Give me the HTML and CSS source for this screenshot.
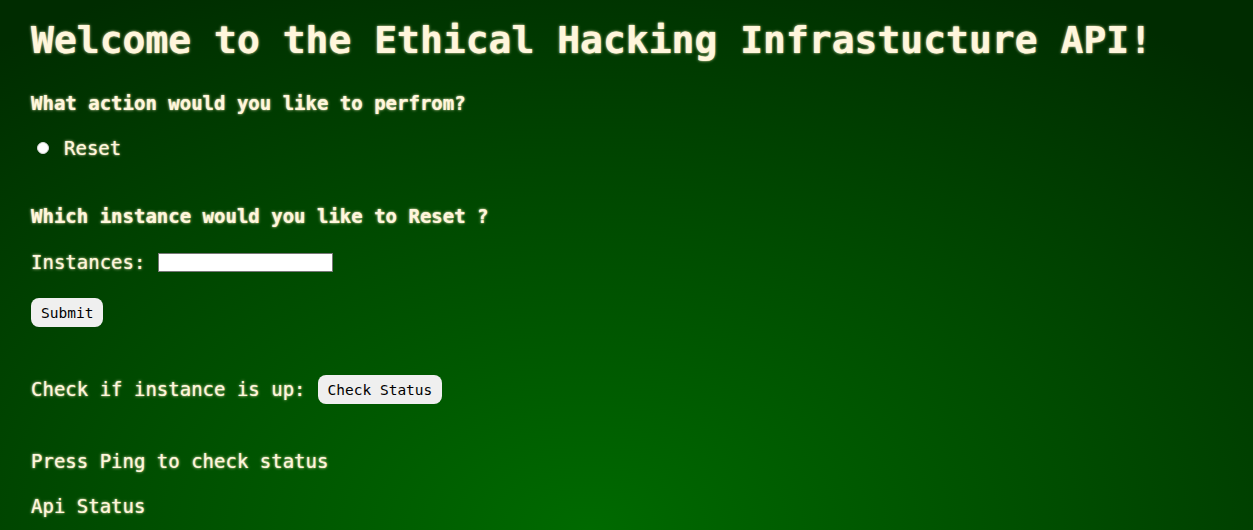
FILE: index.html
```html
<!DOCTYPE html>
<html lang="en">
<head>
<meta charset="utf-8">
<title>Ethical Hacking Infrastructure API</title>
<link rel="stylesheet" href="styles.css">
</head>
<body>
<main class="page">
  <h1 class="title">Welcome to the Ethical Hacking Infrastucture API!</h1>
  <h3 class="question q-action">What action would you like to perfrom?</h3>
  <label class="radio-row">
    <input class="radio" type="radio" name="action" value="reset">
    <span>Reset</span>
  </label>
  <h3 class="question q-instance">Which instance would you like to Reset ?</h3>
  <form class="reset-form">
    <label class="field-row">
      <span>Instances:</span>
      <input class="text-input" type="text" name="instances">
    </label>
    <button class="btn btn-submit" type="button">Submit</button>
  </form>
  <div class="check-row">
    <span>Check if instance is up:</span>
    <button class="btn" type="button">Check Status</button>
  </div>
  <p class="status-line status-ping">Press Ping to check status</p>
  <p class="status-line status-api">Api Status</p>
</main>
</body>
</html>
```
FILE: styles.css
```css
html, body {
  margin: 0;
  padding: 0;
  height: 100%;
}

body {
  background: radial-gradient(ellipse 78% 115% at 47% 100%, #006a00 0%, #004c00 50%, #002c00 100%);
  background-color: #002c00;
  color: #fff6dc;
  font-family: "DejaVu Sans Mono", "Liberation Mono", monospace;
  font-size: 19px;
  overflow: hidden;
}

.page {
  display: flex;
  flex-direction: column;
  align-items: flex-start;
  padding: 0 31px;
  text-shadow: 0 0 3px rgba(255, 245, 200, 0.85), 0 0 1px rgba(255, 245, 200, 0.6);
}

.title {
  font-size: 38px;
  font-weight: bold;
  line-height: 44px;
  margin: 18px 0 0;
}

.question {
  font-size: 19px;
  font-weight: bold;
  line-height: 22px;
  margin: 0;
}

.q-action { margin-top: 30px; }
.q-instance { margin-top: 46px; }

.radio-row {
  display: flex;
  align-items: center;
  gap: 15px;
  margin-top: 23px;
  line-height: 22px;
}

.radio {
  appearance: none;
  -webkit-appearance: none;
  width: 12px;
  height: 12px;
  margin: 0 0 0 6px;
  border-radius: 50%;
  background: #ffffff;
  border: 1px solid #d8d8d8;
}

.reset-form {
  display: flex;
  flex-direction: column;
  align-items: flex-start;
  margin: 24px 0 0;
}

.field-row {
  display: flex;
  align-items: center;
  gap: 13px;
  line-height: 22px;
}

.text-input {
  width: 175px;
  height: 19px;
  box-sizing: border-box;
  border: 1px solid #767676;
  background: #ffffff;
  padding: 0;
  margin: 0;
}

.btn {
  font-family: "DejaVu Sans Mono", "Liberation Mono", monospace;
  font-size: 14.5px;
  height: 29px;
  padding: 0 10px;
  border: none;
  border-radius: 8px;
  background: #efefef;
  color: #000000;
  text-shadow: none;
  cursor: pointer;
}

.btn-submit {
  margin-top: 25px;
}

.check-row {
  display: flex;
  align-items: center;
  gap: 12px;
  margin-top: 48px;
  line-height: 22px;
}

.check-row span {
  position: relative;
  top: -1px;
}

.status-line {
  margin: 0;
  line-height: 22px;
}

.status-ping { margin-top: 46px; }
.status-api { margin-top: 23px; }
```
